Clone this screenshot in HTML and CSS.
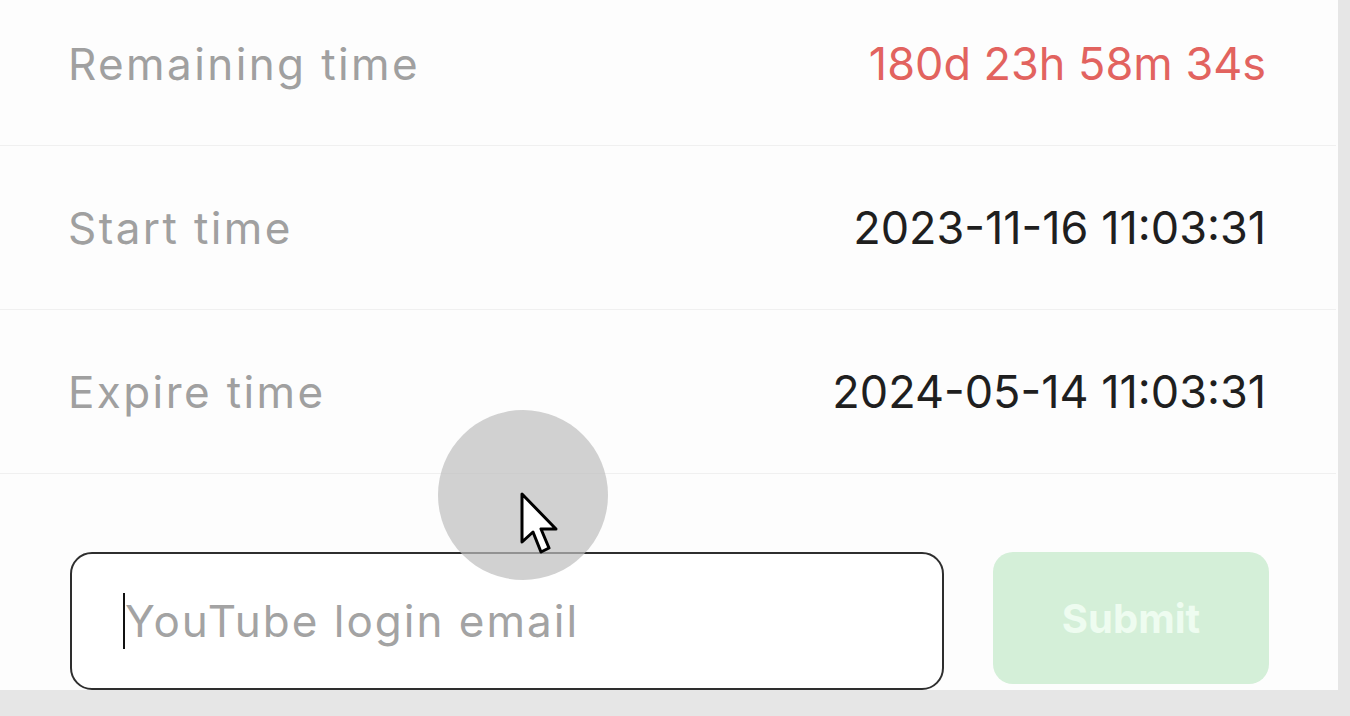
FILE: index.html
```html
<!DOCTYPE html>
<html lang="en">

<head>
    <meta charset="UTF-8">
    <meta name="viewport" content="width=device-width, initial-scale=1.0">
    <title>Membership</title>
    <link rel="stylesheet" href="styles.css">
</head>

<body>
    <div class="panel">
        <!-- 시간 정보 -->
        <ul class="info-list">
            <li class="info-row">
                <span class="label">Remaining time</span>
                <span class="value red">180d 23h 58m 34s</span>
            </li>
            <li class="info-row">
                <span class="label">Start time</span>
                <span class="value">2023-11-16 11:03:31</span>
            </li>
            <li class="info-row">
                <span class="label">Expire time</span>
                <span class="value">2024-05-14 11:03:31</span>
            </li>
        </ul>

        <!-- 이메일 입력 -->
        <div class="email-form">
            <div class="email-input">
                <span class="caret"></span>
                <span class="placeholder">YouTube login email</span>
            </div>
            <button class="submit-btn" disabled>Submit</button>
        </div>

        <!-- 마우스 커서 표시 -->
        <div class="click-mark">
            <svg class="pointer" width="44" height="66" viewBox="0 0 44 66">
                <path d="M2 2 L2 50 L13 40 L21 60 L29 56 L21 37 L36 37 Z" fill="#fff" stroke="#000" stroke-width="3" stroke-linejoin="round"/>
            </svg>
        </div>
    </div>
</body>

</html>
```

FILE: styles.css
```css
/* 기본 설정 */
body {
    margin: 0;
    padding: 0;
    font-family: Inter, "Noto Sans", sans-serif;
    background-color: #e6e6e6;
    overflow: hidden;
}

.panel {
    position: relative;
    width: 1338px;
    height: 690px;
    background-color: #fdfdfd;
    overflow: hidden;
}

/* 정보 목록 */
.info-list {
    list-style: none;
    margin: -18px 0 0 0;
    padding: 0;
    width: 1336px;
}

.info-row {
    display: flex;
    justify-content: space-between;
    align-items: center;
    height: 163px;
    padding: 0 70px 0 68px;
    border-bottom: 1px solid #f0f0f0;
}

.label {
    font-size: 44px;
    letter-spacing: 2.4px;
    color: #a0a0a0;
}

.value {
    font-size: 45px;
    color: #1f1f1f;
}

.value.red {
    color: #e2635f;
}

/* 입력 폼 */
.email-form {
    display: flex;
    align-items: flex-start;
    gap: 49px;
    margin-top: 78px;
    padding-left: 70px;
}

.email-input {
    display: flex;
    align-items: center;
    box-sizing: border-box;
    width: 874px;
    height: 138px;
    padding-left: 51px;
    border: 2px solid #2e2e2e;
    border-radius: 22px;
    background-color: #fff;
}

.caret {
    width: 2px;
    height: 56px;
    background-color: #111;
}

.placeholder {
    font-size: 44px;
    letter-spacing: 2px;
    color: #a3a3a3;
}

.submit-btn {
    width: 276px;
    height: 132px;
    border: none;
    border-radius: 20px;
    background-color: #d4efd8;
    color: #eefcf0;
    font-family: inherit;
    font-size: 40px;
    font-weight: bold;
}

/* 클릭 표시 */
.click-mark {
    position: absolute;
    left: 438px;
    top: 410px;
    width: 170px;
    height: 170px;
    border-radius: 50%;
    background-color: rgba(190, 190, 190, 0.7);
}

.pointer {
    position: absolute;
    left: 82px;
    top: 82px;
}
```
